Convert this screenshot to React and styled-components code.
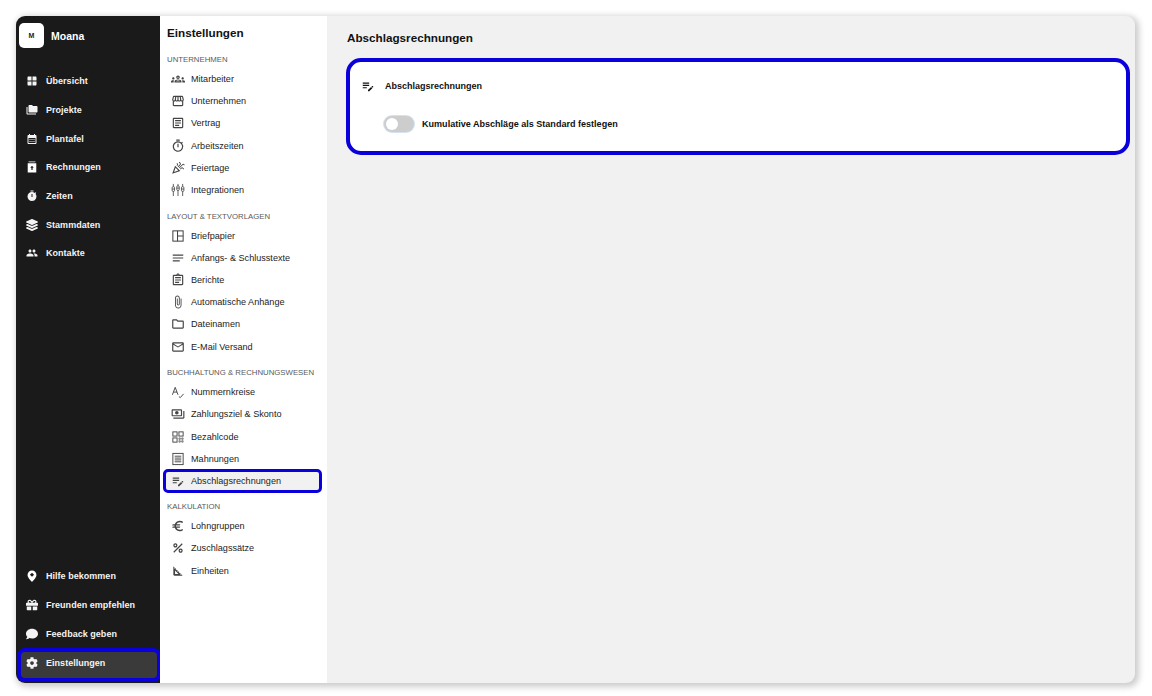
import React from "react";
import styled, { createGlobalStyle } from "styled-components";
import { FaComment, FaGift, FaLayerGroup, FaCog } from "react-icons/fa";
import {
  MdWindow,
  MdFolderCopy,
  MdCalendarMonth,
  MdTimer,
  MdPeople,
  MdOutlineGroups,
  MdOutlineStorefront,
  MdOutlineArticle,
  MdOutlineTimer,
  MdOutlineCelebration,
  MdNotes,
  MdOutlineAssignment,
  MdAttachFile,
  MdOutlineFolder,
  MdOutlineEmail,
  MdOutlinePayments,
  MdEditNote,
  MdEuro,
  MdPercent,
  MdOutlineSquareFoot,
} from "react-icons/md";

const GlobalStyle = createGlobalStyle`
  html, body {
    margin: 0;
    padding: 0;
    background: #fff;
    font-family: "Liberation Sans", Arial, sans-serif;
  }
`;

const Page = styled.div`
  width: 1152px;
  height: 696px;
  padding: 16px 17px 13px 16px;
  box-sizing: border-box;
  overflow: hidden;
`;

const Window = styled.div`
  display: flex;
  height: 100%;
  border-radius: 9px;
  overflow: hidden;
  background: #f1f1f1;
  box-shadow: 2px 2px 6px 2px rgba(0, 0, 0, 0.2);
`;

const Sidebar = styled.nav`
  width: 144px;
  flex: none;
  display: flex;
  flex-direction: column;
  background: #1a1a1a;
  color: #fff;
  padding: 0 0 1px 1px;
  box-sizing: border-box;
`;

const Brand = styled.div`
  display: flex;
  align-items: center;
  gap: 7px;
  padding: 3px 0 0 2px;
  height: 33px;
  margin-bottom: 15px;
  font-size: 10.5px;
  font-weight: 700;
`;

const Logo = styled.div`
  width: 25px;
  height: 25px;
  border-radius: 5px;
  background: #fff;
  color: #1a1a1a;
  display: flex;
  align-items: center;
  justify-content: center;
  font-size: 7px;
  font-weight: 700;
`;

const NavGroup = styled.div`
  display: flex;
  flex-direction: column;
  margin-top: ${(p) => (p.$bottom ? "auto" : "0")};
`;

const NavItem = styled.div`
  height: 28.7px;
  display: flex;
  align-items: center;
  gap: 8px;
  padding-left: 9px;
  font-size: 9px;
  font-weight: 700;
  letter-spacing: 0.03px;
  box-sizing: border-box;
  color: #f4f4f4;
`;

const ActiveNavItem = styled(NavItem)`
  height: 34px;
  padding: 0 0 4px 5px;
  margin-top: 0;
  background: #3a3a3a;
  border: 4px solid #0a00dc;
  border-radius: 8px;
  margin-right: -1px;
`;

const SettingsColumn = styled.aside`
  width: 167px;
  flex: none;
  background: #fff;
  padding: 10px 6px 0 7px;
  box-sizing: border-box;
`;

const SettingsTitle = styled.div`
  font-size: 11.7px;
  font-weight: 700;
  color: #111;
  height: 14px;
  margin-bottom: 15px;
`;

const SectionLabel = styled.div`
  font-size: 7.8px;
  color: #5a5a5a;
  height: 10px;
  line-height: 10px;
  margin: ${(p) => (p.$first ? "0" : "10.4px")} 0 3px 0;
  white-space: nowrap;
`;

const SettingRow = styled.div`
  height: 22.2px;
  display: flex;
  align-items: center;
  gap: 6px;
  padding-left: 4px;
  font-size: 9.1px;
  color: #1c1c1c;
  box-sizing: border-box;
  white-space: nowrap;
  svg {
    color: #444;
    flex: none;
  }
`;

const ActiveSettingRow = styled(SettingRow)`
  height: 24px;
  margin: -1px 0 -1px -4px;
  width: 159px;
  padding-left: 5px;
  background: #f1f1f1;
  border: 3px solid #0a00dc;
  border-radius: 5px;
`;

const Main = styled.main`
  flex: 1;
  padding: 15px 5px 0 19px;
`;

const MainTitle = styled.h1`
  margin: 0 0 13px 1px;
  font-size: 11.7px;
  font-weight: 700;
  line-height: 14px;
  color: #111;
`;

const Card = styled.section`
  height: 97px;
  background: #fff;
  border: 4px solid #0a00dc;
  border-radius: 15px;
  box-sizing: border-box;
  padding: 16px 0 0 11px;
`;

const CardHead = styled.div`
  display: flex;
  align-items: center;
  gap: 10px;
  font-size: 9px;
  font-weight: 700;
  color: #111;
  height: 16px;
  margin-bottom: 22px;
`;

const ToggleRow = styled.div`
  display: flex;
  align-items: center;
  gap: 8px;
  padding-left: 23px;
  font-size: 9.05px;
  font-weight: 700;
  color: #111;
`;

const Toggle = styled.div`
  width: 30px;
  height: 16px;
  border-radius: 8px;
  background: #cdcdcd;
  box-shadow: 0 0 0 1px #d4e2f2;
  display: flex;
  align-items: center;
  padding-left: 2px;
  box-sizing: border-box;
`;

const Knob = styled.div`
  width: 12px;
  height: 12px;
  border-radius: 50%;
  background: #fff;
`;

const InvoiceIcon = () => (
  <svg width="12" height="12" viewBox="0 0 14 14">
    <path fill="#fff" d="M3 .5h8v1H3zM2 2.5h10v11H2z" />
    <path fill="#1a1a1a" d="M6.3 10.5V8H5l2-2.5L9 8H7.7v2.5z" />
  </svg>
);

const PinIcon = () => (
  <svg width="12" height="12" viewBox="0 0 14 14">
    <path fill="#fff" d="M7 .5a5.2 5.2 0 0 0-5.2 5.2C1.8 9.2 7 13.8 7 13.8s5.2-4.6 5.2-8.1A5.2 5.2 0 0 0 7 .5z" />
    <path fill="#1a1a1a" d="M7 3.2 9.4 5.6 7 8 4.6 5.6z" />
  </svg>
);

const SlidersIcon = () => (
  <svg width="14" height="14" viewBox="0 0 15 15" fill="none" stroke="#444" strokeWidth="0.9">
    <path d="M2.5 1v3M2.5 9v5M7.5 1v2M7.5 8v6M12.5 1v3M12.5 9v5" />
    <rect x="1.2" y="4" width="2.6" height="5" rx="1" />
    <rect x="6.2" y="3" width="2.6" height="5" rx="1" />
    <rect x="11.2" y="4" width="2.6" height="5" rx="1" />
    <path d="M1.2 6.5h2.6M6.2 5.5h2.6M11.2 6.5h2.6" />
  </svg>
);

const LetterheadIcon = () => (
  <svg width="14" height="14" viewBox="0 0 15 15" fill="none" stroke="#444" strokeWidth="1.1">
    <rect x="2" y="2" width="11" height="11" />
    <path d="M7 2v11M7 7.5h6" />
  </svg>
);

const SequenceIcon = () => (
  <svg width="14" height="14" viewBox="0 0 15 15" fill="none" stroke="#444" strokeWidth="1">
    <path d="M1.5 10.5 4.5 2.5l3 8M2.6 7.6h3.8M8.5 12.5l1.5 1 3.5-4" />
  </svg>
);

const PayCodeIcon = () => (
  <svg width="14" height="14" viewBox="0 0 15 15" fill="none" stroke="#444" strokeWidth="1">
    <rect x="2" y="2" width="4.5" height="4.5" />
    <rect x="8.5" y="2" width="4.5" height="4.5" />
    <rect x="2" y="8.5" width="4.5" height="4.5" />
    <path d="M8.5 8.5h1.5v1.5h-1.5zM11.5 8.5h1.5v1.5h-1.5zM8.5 11.5h1.5v1.5h-1.5zM11.5 11.5h1.5v1.5h-1.5z" strokeWidth="0.7" />
  </svg>
);

const RemindersIcon = () => (
  <svg width="14" height="14" viewBox="0 0 15 15" fill="none" stroke="#444" strokeWidth="1">
    <rect x="2" y="1.5" width="11" height="12" />
    <path d="M4 4.5h7M4 6.5h7M4 8.5h7M4 10.5h7" />
  </svg>
);

const topNav = [
  [<MdWindow size={12} />, "Übersicht"],
  [<MdFolderCopy size={12} />, "Projekte"],
  [<MdCalendarMonth size={12} />, "Plantafel"],
  [<InvoiceIcon />, "Rechnungen"],
  [<MdTimer size={12} />, "Zeiten"],
  [<FaLayerGroup size={12} />, "Stammdaten"],
  [<MdPeople size={12} />, "Kontakte"],
];

const bottomNav = [
  [<PinIcon />, "Hilfe bekommen"],
  [<FaGift size={12} />, "Freunden empfehlen"],
  [<FaComment size={12} />, "Feedback geben"],
];

const sections = [
  {
    label: "UNTERNEHMEN",
    items: [
      [<MdOutlineGroups size={14} />, "Mitarbeiter"],
      [<MdOutlineStorefront size={14} />, "Unternehmen"],
      [<MdOutlineArticle size={14} />, "Vertrag"],
      [<MdOutlineTimer size={14} />, "Arbeitszeiten"],
      [<MdOutlineCelebration size={14} />, "Feiertage"],
      [<SlidersIcon />, "Integrationen"],
    ],
  },
  {
    label: "LAYOUT & TEXTVORLAGEN",
    items: [
      [<LetterheadIcon />, "Briefpapier"],
      [<MdNotes size={14} />, "Anfangs- & Schlusstexte"],
      [<MdOutlineAssignment size={14} />, "Berichte"],
      [<MdAttachFile size={14} />, "Automatische Anhänge"],
      [<MdOutlineFolder size={14} />, "Dateinamen"],
      [<MdOutlineEmail size={14} />, "E-Mail Versand"],
    ],
  },
  {
    label: "BUCHHALTUNG & RECHNUNGSWESEN",
    items: [
      [<SequenceIcon />, "Nummernkreise"],
      [<MdOutlinePayments size={14} />, "Zahlungsziel & Skonto"],
      [<PayCodeIcon />, "Bezahlcode"],
      [<RemindersIcon />, "Mahnungen"],
      [<MdEditNote size={14} />, "Abschlagsrechnungen", true],
    ],
  },
  {
    label: "KALKULATION",
    items: [
      [<MdEuro size={14} />, "Lohngruppen"],
      [<MdPercent size={14} />, "Zuschlagssätze"],
      [<MdOutlineSquareFoot size={14} />, "Einheiten"],
    ],
  },
];

export default function App() {
  return (
    <>
      <GlobalStyle />
      <Page>
        <Window>
          <Sidebar>
            <Brand>
              <Logo>M</Logo>
              Moana
            </Brand>
            <NavGroup>
              {topNav.map(([icon, label]) => (
                <NavItem key={label}>
                  {icon}
                  {label}
                </NavItem>
              ))}
            </NavGroup>
            <NavGroup $bottom>
              {bottomNav.map(([icon, label]) => (
                <NavItem key={label}>
                  {icon}
                  {label}
                </NavItem>
              ))}
              <ActiveNavItem>
                <FaCog size={12} />
                Einstellungen
              </ActiveNavItem>
            </NavGroup>
          </Sidebar>
          <SettingsColumn>
            <SettingsTitle>Einstellungen</SettingsTitle>
            {sections.map((section, i) => (
              <div key={section.label}>
                <SectionLabel $first={i === 0}>{section.label}</SectionLabel>
                {section.items.map(([icon, label, active]) => {
                  const Row = active ? ActiveSettingRow : SettingRow;
                  return (
                    <Row key={label}>
                      {icon}
                      {label}
                    </Row>
                  );
                })}
              </div>
            ))}
          </SettingsColumn>
          <Main>
            <MainTitle>Abschlagsrechnungen</MainTitle>
            <Card>
              <CardHead>
                <MdEditNote size={14} />
                Abschlagsrechnungen
              </CardHead>
              <ToggleRow>
                <Toggle>
                  <Knob />
                </Toggle>
                Kumulative Abschläge als Standard festlegen
              </ToggleRow>
            </Card>
          </Main>
        </Window>
      </Page>
    </>
  );
}
